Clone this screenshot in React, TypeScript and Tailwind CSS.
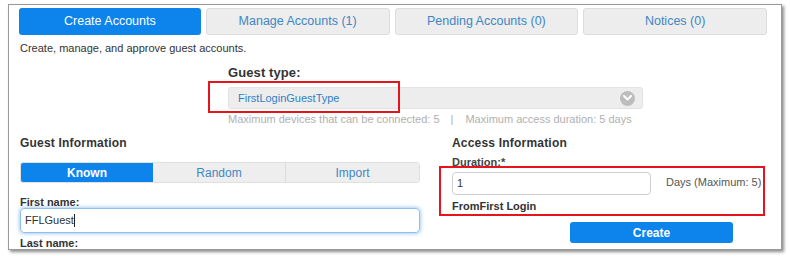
import React from "react";

const font = { fontFamily: '"Liberation Sans", Arial, sans-serif' };

export default function App() {
  const tabs = ["Create Accounts", "Manage Accounts (1)", "Pending Accounts (0)", "Notices (0)"];
  return (
    <div className="w-[790px] h-[256px] bg-white overflow-hidden" style={font}>
      <div className="ml-[8px] mt-[4px] w-[774px] h-[246px] border border-[#9a9a9a] bg-white shadow-[2px_2px_3px_rgba(0,0,0,0.45)] overflow-hidden">
        <div className="pl-[10px] pr-[14px] pt-[3px]">
          {/* tabs */}
          <div className="flex gap-[5px] h-[27px]">
            {tabs.map((t, i) => (
              <div
                key={t}
                className={
                  i === 0
                    ? "flex-1 flex items-center justify-center rounded-[3px] bg-[#0c84ec] text-white text-[12.5px]"
                    : "flex-1 flex items-center justify-center rounded-[3px] bg-[#ededed] border border-[#dcdcdc] text-[#3f86c4] text-[12.5px]"
                }
              >
                {t}
              </div>
            ))}
          </div>
          {/* description */}
          <div className="mt-[6px] h-[14px] leading-[14px] text-[11px] text-[#333] pl-px">
            Create, manage, and approve guest accounts.
          </div>
          {/* guest type */}
          <div className="ml-[209px] w-[415px]">
            <div className="mt-[10px] h-[16px] leading-[16px] text-[13px] font-bold text-[#333] tracking-[0.1px]">Guest type:</div>
            <div className="relative mt-[6px] h-[22px] rounded-[3px] bg-[#ededed] border border-[#e2e2e2] flex items-center justify-between pl-[9px] pr-[7px]">
              <span className="text-[11px] text-[#2f7fc6]">FirstLoginGuestType</span>
              <span className="w-[15px] h-[15px] rounded-full bg-[#bdbdbd] flex items-center justify-center">
                <svg width="9" height="6" viewBox="0 0 9 6">
                  <path d="M1 1 L4.5 4.5 L8 1" fill="none" stroke="white" strokeWidth="2" strokeLinecap="round" strokeLinejoin="round" />
                </svg>
              </span>
              <div className="absolute left-[-21px] top-[-7px] w-[192px] h-[32px] border-2 border-[#e5141d]"></div>
            </div>
            <div className="mt-[3px] h-[14px] leading-[14px] text-[11px] text-[#b0b0b0] flex">
              <span>Maximum devices that can be connected: 5</span>
              <span className="ml-[11px]">|</span>
              <span className="ml-[12px]">Maximum access duration: 5 days</span>
            </div>
          </div>
          {/* columns */}
          <div className="mt-[9px] flex gap-[32px] pl-px">
            <div className="w-[400px]">
              <div className="h-[16px] leading-[16px] text-[12px] font-bold text-[#333] tracking-[0.2px]">Guest Information</div>
              <div className="mt-[11px] h-[21px] flex rounded-[3px] overflow-hidden border border-[#e0e0e0]">
                <div className="w-[132px] bg-[#0c84ec] text-white font-bold text-[12px] flex items-center justify-center">Known</div>
                <div className="w-[133px] bg-[#eeeeee] border-r border-[#dcdcdc] text-[#3f86c4] text-[12px] flex items-center justify-center">Random</div>
                <div className="flex-1 bg-[#eeeeee] text-[#3f86c4] text-[12px] flex items-center justify-center">Import</div>
              </div>
              <div className="mt-[13px] h-[12px] leading-[12px] text-[11px] font-bold text-[#333]">First name:</div>
              <div className="h-[25px] rounded-[4px] border border-[#8cc1ec] shadow-[0_0_4px_rgba(70,150,230,0.7)] flex items-center pl-[4px] text-[11px] text-[#333]">
                <span>FFLGuest</span>
                <span className="w-px h-[13px] bg-[#222]"></span>
              </div>
              <div className="mt-[4px] h-[12px] leading-[12px] text-[11px] font-bold text-[#333]">Last name:</div>
            </div>
            <div className="relative w-[313px]">
              <div className="h-[16px] leading-[16px] text-[12px] font-bold text-[#333] tracking-[0.2px]">Access Information</div>
              <div className="mt-[5px] h-[12px] leading-[12px] text-[11px] font-bold text-[#444]">Duration:*</div>
              <div className="mt-[4px] flex items-center">
                <div className="w-[199px] h-[23px] rounded-[4px] border border-[#cfcfcf] flex items-center pl-[4px] text-[11px] text-[#333]">1</div>
                <div className="ml-[15px] text-[11px] text-[#555] -mt-[2px]">Days (Maximum: 5)</div>
              </div>
              <div className="mt-[5px] h-[12px] leading-[12px] text-[11px] font-bold text-[#333]">FromFirst Login</div>
              <div className="mt-[10px] ml-[118px] w-[163px] h-[21px] rounded-[3px] bg-[#0c84ec] text-white font-bold text-[12px] flex items-center justify-center">Create</div>
              <div className="absolute left-[-13px] top-[31px] w-[326px] h-[50px] border-2 border-[#e5141d]"></div>
            </div>
          </div>
        </div>
      </div>
    </div>
  );
}
